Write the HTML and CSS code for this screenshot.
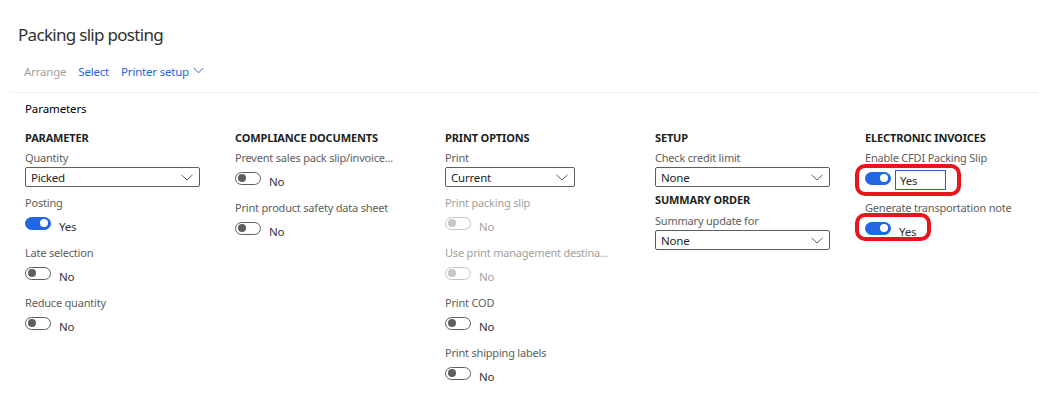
FILE: index.html
```html
<!DOCTYPE html>
<html lang="en">
<head>
<meta charset="utf-8">
<title>Packing slip posting</title>
<link rel="stylesheet" href="styles.css">
</head>
<body>
<div class="page">
  <h1 class="title">Packing slip posting</h1>
  <div class="actions">
    <span class="action disabled">Arrange</span>
    <span class="action">Select</span>
    <span class="action">Printer setup
      <svg class="chev" width="11" height="7" viewBox="0 0 11 7"><path d="M0.5 0.8 L5.5 5.8 L10.5 0.8" fill="none" stroke="#2266e3" stroke-width="1"/></svg>
    </span>
  </div>
  <div class="divider"></div>
  <div class="section-title">Parameters</div>

  <div class="columns">
    <div class="col">
      <div class="group-head">PARAMETER</div>
      <div class="field sel">
        <div class="label">Quantity</div>
        <div class="select"><span>Picked</span><svg width="12" height="7" viewBox="0 0 12 7"><path d="M0.5 0.8 L6 6 L11.5 0.8" fill="none" stroke="#605e5c" stroke-width="1"/></svg></div>
      </div>
      <div class="field">
        <div class="label">Posting</div>
        <div class="trow"><span class="toggle on"></span><span class="tval">Yes</span></div>
      </div>
      <div class="field">
        <div class="label">Late selection</div>
        <div class="trow"><span class="toggle"></span><span class="tval">No</span></div>
      </div>
      <div class="field">
        <div class="label">Reduce quantity</div>
        <div class="trow"><span class="toggle"></span><span class="tval">No</span></div>
      </div>
    </div>

    <div class="col">
      <div class="group-head">COMPLIANCE DOCUMENTS</div>
      <div class="field">
        <div class="label">Prevent sales pack slip/invoice...</div>
        <div class="trow"><span class="toggle"></span><span class="tval">No</span></div>
      </div>
      <div class="field">
        <div class="label">Print product safety data sheet</div>
        <div class="trow"><span class="toggle"></span><span class="tval">No</span></div>
      </div>
    </div>

    <div class="col">
      <div class="group-head">PRINT OPTIONS</div>
      <div class="field sel">
        <div class="label">Print</div>
        <div class="select narrow"><span>Current</span><svg width="12" height="7" viewBox="0 0 12 7"><path d="M0.5 0.8 L6 6 L11.5 0.8" fill="none" stroke="#605e5c" stroke-width="1"/></svg></div>
      </div>
      <div class="field disabled">
        <div class="label">Print packing slip</div>
        <div class="trow"><span class="toggle"></span><span class="tval">No</span></div>
      </div>
      <div class="field disabled">
        <div class="label">Use print management destina...</div>
        <div class="trow"><span class="toggle"></span><span class="tval">No</span></div>
      </div>
      <div class="field">
        <div class="label">Print COD</div>
        <div class="trow"><span class="toggle"></span><span class="tval">No</span></div>
      </div>
      <div class="field">
        <div class="label">Print shipping labels</div>
        <div class="trow"><span class="toggle"></span><span class="tval">No</span></div>
      </div>
    </div>

    <div class="col">
      <div class="group-head">SETUP</div>
      <div class="field sel tight">
        <div class="label">Check credit limit</div>
        <div class="select"><span>None</span><svg width="12" height="7" viewBox="0 0 12 7"><path d="M0.5 0.8 L6 6 L11.5 0.8" fill="none" stroke="#605e5c" stroke-width="1"/></svg></div>
      </div>
      <div class="group-head sub">SUMMARY ORDER</div>
      <div class="field sel">
        <div class="label">Summary update for</div>
        <div class="select"><span>None</span><svg width="12" height="7" viewBox="0 0 12 7"><path d="M0.5 0.8 L6 6 L11.5 0.8" fill="none" stroke="#605e5c" stroke-width="1"/></svg></div>
      </div>
    </div>

    <div class="col">
      <div class="group-head">ELECTRONIC INVOICES</div>
      <div class="field">
        <div class="label">Enable CFDI Packing Slip</div>
        <div class="trow">
          <span class="toggle on"></span><span class="tval boxed">Yes</span>
          <span class="highlight h1"></span>
        </div>
      </div>
      <div class="field">
        <div class="label">Generate transportation note</div>
        <div class="trow">
          <span class="toggle on"></span><span class="tval">Yes</span>
          <span class="highlight h2"></span>
        </div>
      </div>
    </div>
  </div>
</div>
</body>
</html>
```

FILE: styles.css
```css
html, body {
  margin: 0;
  padding: 0;
  background: #ffffff;
}

body {
  font-family: "Noto Sans", "Open Sans", sans-serif;
  color: #323130;
}

.page {
  width: 1039px;
  height: 401px;
  overflow: hidden;
}

.title {
  margin: 21px 0 0 18px;
  font-size: 17px;
  font-weight: 400;
  letter-spacing: -0.7px;
  line-height: 28px;
  color: #323130;
}

.actions {
  display: flex;
  align-items: center;
  gap: 12px;
  height: 24px;
  margin-top: 10px;
  padding-left: 24px;
  font-size: 11.5px;
  letter-spacing: -0.2px;
}

.action {
  color: #2266e3;
  display: flex;
  align-items: center;
  gap: 4px;
}

.action.disabled {
  color: #a19f9d;
}

.chev {
  margin-top: -2px;
}

.divider {
  margin: 9px 0 0 10px;
  border-top: 1px solid #f3f2f1;
}

.section-title {
  margin: 7px 0 0 25px;
  font-size: 11.5px;
  letter-spacing: -0.1px;
  line-height: 18px;
  color: #000000;
}

.columns {
  display: flex;
  margin-top: 12px;
  padding-left: 25px;
}

.col {
  width: 210px;
  flex: none;
  display: flex;
  flex-direction: column;
}

.group-head {
  font-size: 11px;
  font-weight: 700;
  letter-spacing: -0.15px;
  line-height: 16px;
  color: #201f1e;
  margin-bottom: 4px;
}

.group-head.sub {
  margin-bottom: 5px;
}

.field {
  display: flex;
  flex-direction: column;
  margin-bottom: 10px;
}

.field.sel {
  margin-bottom: 8px;
}

.field.sel.tight {
  margin-bottom: 5px;
}

.label {
  font-size: 11px;
  letter-spacing: -0.2px;
  line-height: 16px;
  color: #605e5c;
  white-space: nowrap;
}

.select {
  margin-top: 1px;
  width: 175px;
  height: 20px;
  box-sizing: border-box;
  border: 1px solid #605e5c;
  border-radius: 2px;
  display: flex;
  align-items: center;
  justify-content: space-between;
  padding: 0 6px 0 5px;
  font-size: 11.5px;
  letter-spacing: -0.2px;
  color: #201f1e;
}

.select.narrow {
  width: 130px;
}

.trow {
  height: 24px;
  display: flex;
  align-items: center;
  position: relative;
}

.toggle {
  width: 26px;
  height: 13px;
  box-sizing: border-box;
  border: 1px solid #605e5c;
  border-radius: 7px;
  display: flex;
  align-items: center;
  padding: 0 2px;
  background: #ffffff;
  flex: none;
}

.toggle::after {
  content: "";
  width: 8px;
  height: 8px;
  border-radius: 50%;
  background: #605e5c;
}

.toggle.on {
  background: #2266e3;
  border-color: #2266e3;
  justify-content: flex-end;
}

.toggle.on::after {
  background: #ffffff;
}

.field.disabled .label,
.field.disabled .tval {
  color: #a19f9d;
}

.field.disabled .toggle {
  border-color: #c8c6c4;
}

.field.disabled .toggle::after {
  background: #c8c6c4;
}

.tval {
  margin-left: 8px;
  margin-top: 6px;
  font-size: 11.5px;
  letter-spacing: -0.2px;
  color: #323130;
}

.tval.boxed {
  margin-left: 4px;
  margin-top: 4px;
  width: 51px;
  height: 20px;
  box-sizing: border-box;
  border: 1px solid #2b5fb8;
  padding: 2px 0 0 4px;
  line-height: 16px;
}

.highlight {
  position: absolute;
  border: 4px solid #e8141e;
  border-radius: 10px;
  box-sizing: border-box;
  pointer-events: none;
}

.highlight.h1 {
  left: -10px;
  top: -2px;
  width: 106px;
  height: 32px;
}

.highlight.h2 {
  left: -10px;
  top: -3px;
  width: 76px;
  height: 28px;
}
```
